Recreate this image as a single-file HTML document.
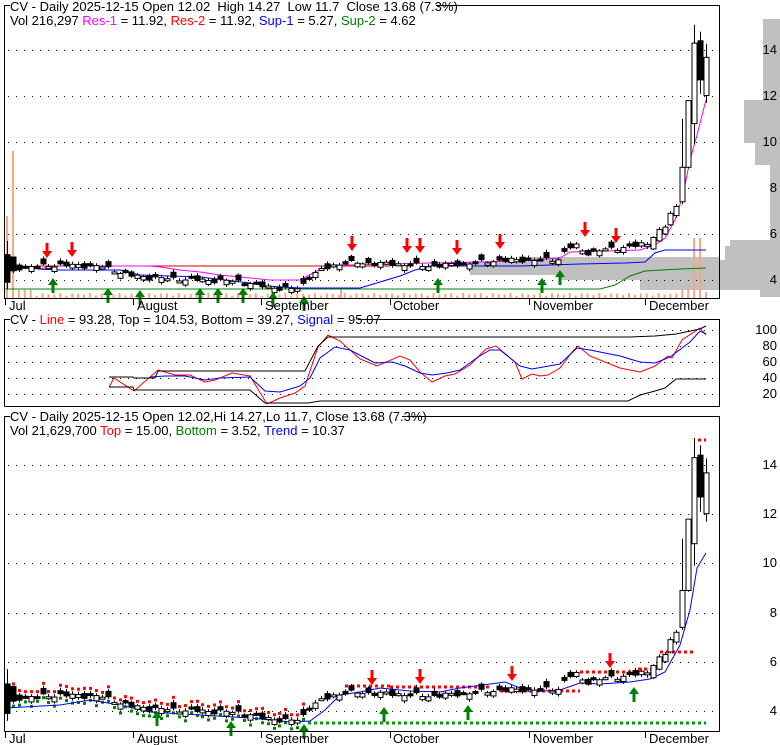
<!DOCTYPE html>
<html><head><meta charset="utf-8"><style>
html,body{margin:0;padding:0;background:#fff;}
svg{display:block;font-family:"Liberation Sans",sans-serif;}
text{white-space:pre;}
</style></head><body>
<svg id="s" width="780" height="745" xmlns="http://www.w3.org/2000/svg">
<rect width="780" height="745" fill="#fff"/>
<defs>
<clipPath id="c1"><rect x="4" y="6" width="715" height="292"/></clipPath>
<clipPath id="c3"><rect x="4" y="417" width="715" height="314"/></clipPath>
</defs>
<g id="g"></g>
</svg>
<script>
var g=document.getElementById('g');
var out='';
function add(s){out+=s;}
function R(x,y,w,h,c){add('<rect x="'+x+'" y="'+y+'" width="'+w+'" height="'+h+'" fill="'+c+'"/>');}
R(763,19,17,81,'#c0c0c0');R(744,100,36,43,'#c0c0c0');R(755,143,25,22,'#c0c0c0');R(770,165,10,75,'#c0c0c0');
R(730,240,50,6,'#c0c0c0');R(725,246,55,14,'#c0c0c0');R(720,260,60,30,'#c0c0c0');R(760,290,20,7,'#c0c0c0');
R(520,257,199,5,'#c0c0c0');R(470,262,249,13,'#c0c0c0');R(560,275,159,5,'#c0c0c0');R(640,280,79,10,'#c0c0c0');
function hgrid(y,x1,x2){add('<line x1="'+x1+'" y1="'+y+'" x2="'+x2+'" y2="'+y+'" stroke="#000" stroke-width="1" stroke-dasharray="1,7"/>');}
[50,96,142,188,234,280].forEach(function(y){hgrid(y+.5,8,716)});
[330,346,362,378,394].forEach(function(y){hgrid(y+.5,8,716)});
[465,514,563,613,662,711].forEach(function(y){hgrid(y+.5,8,716)});
var N=119,SP=699/(N-1);
function X(i){return 7+i*SP;}
var kx=[[7,4.5],[40,4.6],[60,4.65],[100,4.6],[130,4.2],[150,4.1],[200,4.0],[240,3.95],[260,3.75],[285,3.6],[300,3.65],[310,4.2],[330,4.6],[345,4.75],[390,4.7],[430,4.6],[460,4.7],[500,4.85],[560,4.9],[566,5.4],[575,5.5],[585,5.15],[600,5.3],[630,5.45],[650,5.6]];
var kp=kx.map(function(k){return [(k[0]-7)/SP,k[1]]});
function interp(i){for(var k=0;k<kp.length-1;k++){if(i>=kp[k][0]&&i<=kp[k+1][0]){var t=(i-kp[k][0])/(kp[k+1][0]-kp[k][0]);return kp[k][1]+t*(kp[k+1][1]-kp[k][1]);}}return kp[kp.length-1][1];}
var C=[];
for(var i=0;i<N-11;i++){var c=interp(i)+0.07*Math.sin(i*2.3)+0.04*Math.cos(i*5.1);var o=c-0.22*Math.sin(i*1.7+1);C.push([o,Math.max(o,c)+0.06+0.06*Math.abs(Math.sin(i*3.3)),Math.min(o,c)-0.05-0.05*Math.abs(Math.cos(i*2.9)),c]);}
C[0]=[5.1,5.7,3.6,3.9];C[1]=[5.0,5.0,4.3,4.4];
var last=[[5.5,5.65,5.35,5.55],[5.35,5.9,5.3,5.85],[5.7,6.3,5.65,6.2],[6.0,6.4,5.95,6.3],[6.4,7.0,6.35,6.9],[6.8,7.3,6.7,7.2],[7.4,11,7.3,8.9],[8.9,11.8,8.85,11.8],[10.8,15.1,9.9,14.3],[14.4,14.8,12.1,12.7],[12.02,14.27,11.7,13.68]];
last.forEach(function(d){C.push(d)});
function Y1(p){return 280-(p-4)*23;}
function Y3(p){return 711-(p-4)*24.6;}
var vol='';
for(var i=0;i<C.length;i++){var h=2+3*Math.abs(Math.sin(i*1.9));if(i==0)h=82;if(i==1)h=147;if(i>=2&&i<=4)h=8;if(i==C.length-3||i==C.length-2)h=60;if(i==C.length-4)h=12;if(i==C.length-1)h=6;if(i==C.length-5)h=8;
vol+='<rect x="'+(X(i)-1)+'" y="'+(298-h)+'" width="2" height="'+h+'" fill="#f4a882"/>';}
vol+='<rect x="340" y="288" width="2" height="10" fill="#f4a882"/>';
add(vol);
function pl(pts,col,w){add('<polyline fill="none" stroke="'+col+'" stroke-width="'+(w||1)+'" points="'+pts.map(function(p){return p.join(',')}).join(' ')+'"/>');}
add('<g clip-path="url(#c1)">');
pl([[35,266],[390,266]],'#d00000');
pl([[37,269],[60,266],[150,266],[160,267],[180,270],[200,272],[220,275],[270,280],[300,280],[315,272],[330,266],[350,265],[390,264],[430,263],[480,262],[520,261],[560,258],[570,252],[640,250],[655,245],[665,238],[675,220],[683,195],[690,160],[697,135],[706,100]],'#ff00ff');
pl([[37,269],[60,270],[120,270],[140,275],[200,277],[250,283],[265,286],[300,288],[330,288],[360,288],[380,282],[400,276],[415,270],[430,266],[520,266],[580,264],[625,263],[645,262],[655,253],[665,250],[706,250]],'#0000ff');
pl([[5,289],[600,289],[615,285],[630,276],[645,271],[680,269],[706,268]],'#008000');
add('</g>');
function candles(Y,clip){var s='<g clip-path="url(#'+clip+')" stroke="#000" stroke-width="1">';
for(var i=0;i<C.length;i++){var d=C[i],x=Math.round(X(i))+.5;
s+='<line x1="'+x+'" y1="'+Y(d[1])+'" x2="'+x+'" y2="'+Y(d[2])+'"/>';
var t=Math.min(Y(d[0]),Y(d[3])),b=Math.max(Y(d[0]),Y(d[3]));if(b-t<2)b=t+2;
s+='<rect x="'+(x-2.5)+'" y="'+t+'" width="5" height="'+(b-t)+'" fill="'+(d[3]>=d[0]?'#fff':'#000')+'"/>';}
return s+'</g>';}
add(candles(Y1,'c1'));
function dn(x,y){add('<path d="M'+(x-1.5)+' '+y+'h3v8h3.5l-5 7l-5-7h3.5z" fill="#ff0000"/>');}
function up(x,y){add('<path d="M'+(x-1.5)+' '+(y+15)+'h3v-8h3.5l-5-7l-5 7h3.5z" fill="#008000"/>');}
[[47,243],[72,242],[352,236],[407,238],[420,238],[457,240],[500,234],[585,222],[616,228]].forEach(function(a){dn(a[0],a[1])});
[[53,278],[108,288],[140,290],[200,288],[218,288],[243,288],[273,292],[304,296],[438,278],[542,278],[560,270]].forEach(function(a){up(a[0],a[1])});
var dts='';
for(var i=1;i<=50;i++){var x=Math.round(X(i));dts+='<rect x="'+(x-1)+'" y="'+(Y3(C[i][1])-4)+'" width="3" height="3" fill="#ff0000"/><rect x="'+(x-1)+'" y="'+(Y3(C[i][2])+1)+'" width="3" height="3" fill="#008000"/>';}
add(dts);
function dl(x1,x2,y,col){add('<line x1="'+x1+'" y1="'+y+'" x2="'+x2+'" y2="'+y+'" stroke="'+col+'" stroke-width="3" stroke-dasharray="3,3"/>');}
dl(308,706,723,'#00a000');dl(345,390,686,'#ff0000');dl(390,490,687,'#ff0000');dl(500,580,691,'#ff0000');dl(580,632,672,'#ff0000');dl(638,652,669,'#ff0000');dl(660,696,652,'#ff0000');dl(698,706,440,'#ff0000');
add('<g clip-path="url(#c3)">');
pl([[5,708],[60,705],[90,700],[120,705],[150,712],[200,715],[250,718],[290,722],[310,721],[325,710],[340,695],[360,692],[380,688],[410,691],[440,692],[460,688],[505,682],[530,692],[560,690],[580,683],[600,684],[630,682],[650,679],[665,672],[680,645],[690,610],[697,568],[706,553]],'#0000ff');
add('</g>');
add(candles(Y3,'c3'));
[[372,670],[420,669],[512,666],[610,653]].forEach(function(a){dn(a[0],a[1])});
[[157,711],[231,721],[304,724],[384,707],[468,705],[634,687]].forEach(function(a){up(a[0],a[1])});
pl([[109,387],[114,378],[134,391],[158,370],[175,375],[190,375],[205,382],[215,380],[232,373],[250,376],[267,404],[280,398],[295,393],[305,386],[318,347],[328,335],[340,341],[360,359],[377,366],[400,356],[410,360],[420,372],[432,382],[445,376],[455,374],[470,365],[486,349],[496,346],[515,362],[522,379],[532,374],[540,376],[548,375],[560,368],[573,351],[578,346],[590,356],[620,368],[640,372],[655,366],[668,356],[672,358],[682,340],[700,328],[706,335]],'#ff0000');
pl([[150,377],[165,376],[185,376],[205,380],[220,378],[250,377],[265,391],[280,392],[300,386],[310,378],[320,358],[335,347],[350,350],[375,363],[392,362],[405,366],[420,373],[432,375],[447,373],[460,370],[478,357],[490,350],[500,350],[520,366],[532,369],[560,364],[577,348],[590,350],[620,356],[640,362],[655,363],[670,357],[690,342],[700,331],[706,334]],'#0000ff');
pl([[109,387],[133,387],[134,390],[250,390],[265,403],[308,403],[320,401],[628,401],[640,395],[655,391],[665,388],[676,379],[706,379]],'#000');
pl([[109,377],[133,377],[134,378],[155,378],[158,371],[265,371],[305,371],[318,346],[328,337],[630,337],[655,336],[676,334],[700,329],[706,326]],'#000');
add('<path d="M4.5 299V5.5H10M436 5.5H719.5V298.5H4.5" fill="none" stroke="#000"/>');
add('<path d="M4.5 406.5V319.5H10M358 319.5H719.5V406.5H4.5" fill="none" stroke="#000"/>');
add('<path d="M4.5 731.5V416.5H10M402 416.5H719.5V731.5H4.5" fill="none" stroke="#000"/>');
[5,133,261,390,529,645].forEach(function(x){add('<line x1="'+(x+.5)+'" y1="298" x2="'+(x+.5)+'" y2="305" stroke="#000"/><line x1="'+(x+.5)+'" y1="731" x2="'+(x+.5)+'" y2="738" stroke="#000"/>');});
function T(x,y,s,a,fs){add('<text x="'+x+'" y="'+y+'" font-size="'+(fs||13)+'"'+(a?' text-anchor="end"':'')+' fill="#000">'+s+'</text>');}
T(10,11,'CV - Daily 2025-12-15 Open 12.02  High 14.27  Low 11.7  Close 13.68 (7.3%)');
T(10,25,'Vol 216,297 <tspan fill="#ff00ff">Res-1</tspan> = 11.92, <tspan fill="#ff0000">Res-2</tspan> = 11.92, <tspan fill="#0000ff">Sup-1</tspan> = 5.27, <tspan fill="#008000">Sup-2</tspan> = 4.62');
T(10,324,'CV - <tspan fill="#ff0000">Line</tspan> = 93.28, Top = 104.53, Bottom = 39.27, <tspan fill="#0000ff">Signal</tspan> = 95.07');
T(10,421,'CV - Daily 2025-12-15 Open 12.02,Hi 14.27,Lo 11.7, Close 13.68 (7.3%)');
T(10,435,'Vol 21,629,700 <tspan fill="#ff0000">Top</tspan> = 15.00, <tspan fill="#008000">Bottom</tspan> = 3.52, <tspan fill="#0000ff">Trend</tspan> = 10.37');
[['Jul',9],['August',137],['September',265],['October',393],['November',533],['December',649]].forEach(function(m){T(m[1],310,m[0]);T(m[1],743,m[0]);});
[[14,54],[12,100],[10,146],[8,192],[6,238],[4,284]].forEach(function(l){T(777,l[1],l[0],1);});
[[100,334],[80,350],[60,366],[40,382],[20,398]].forEach(function(l){T(777,l[1],l[0],1);});
[[14,469],[12,518],[10,567],[8,617],[6,666],[4,715]].forEach(function(l){T(777,l[1],l[0],1);});
g.innerHTML=out;
</script>
</body></html>
